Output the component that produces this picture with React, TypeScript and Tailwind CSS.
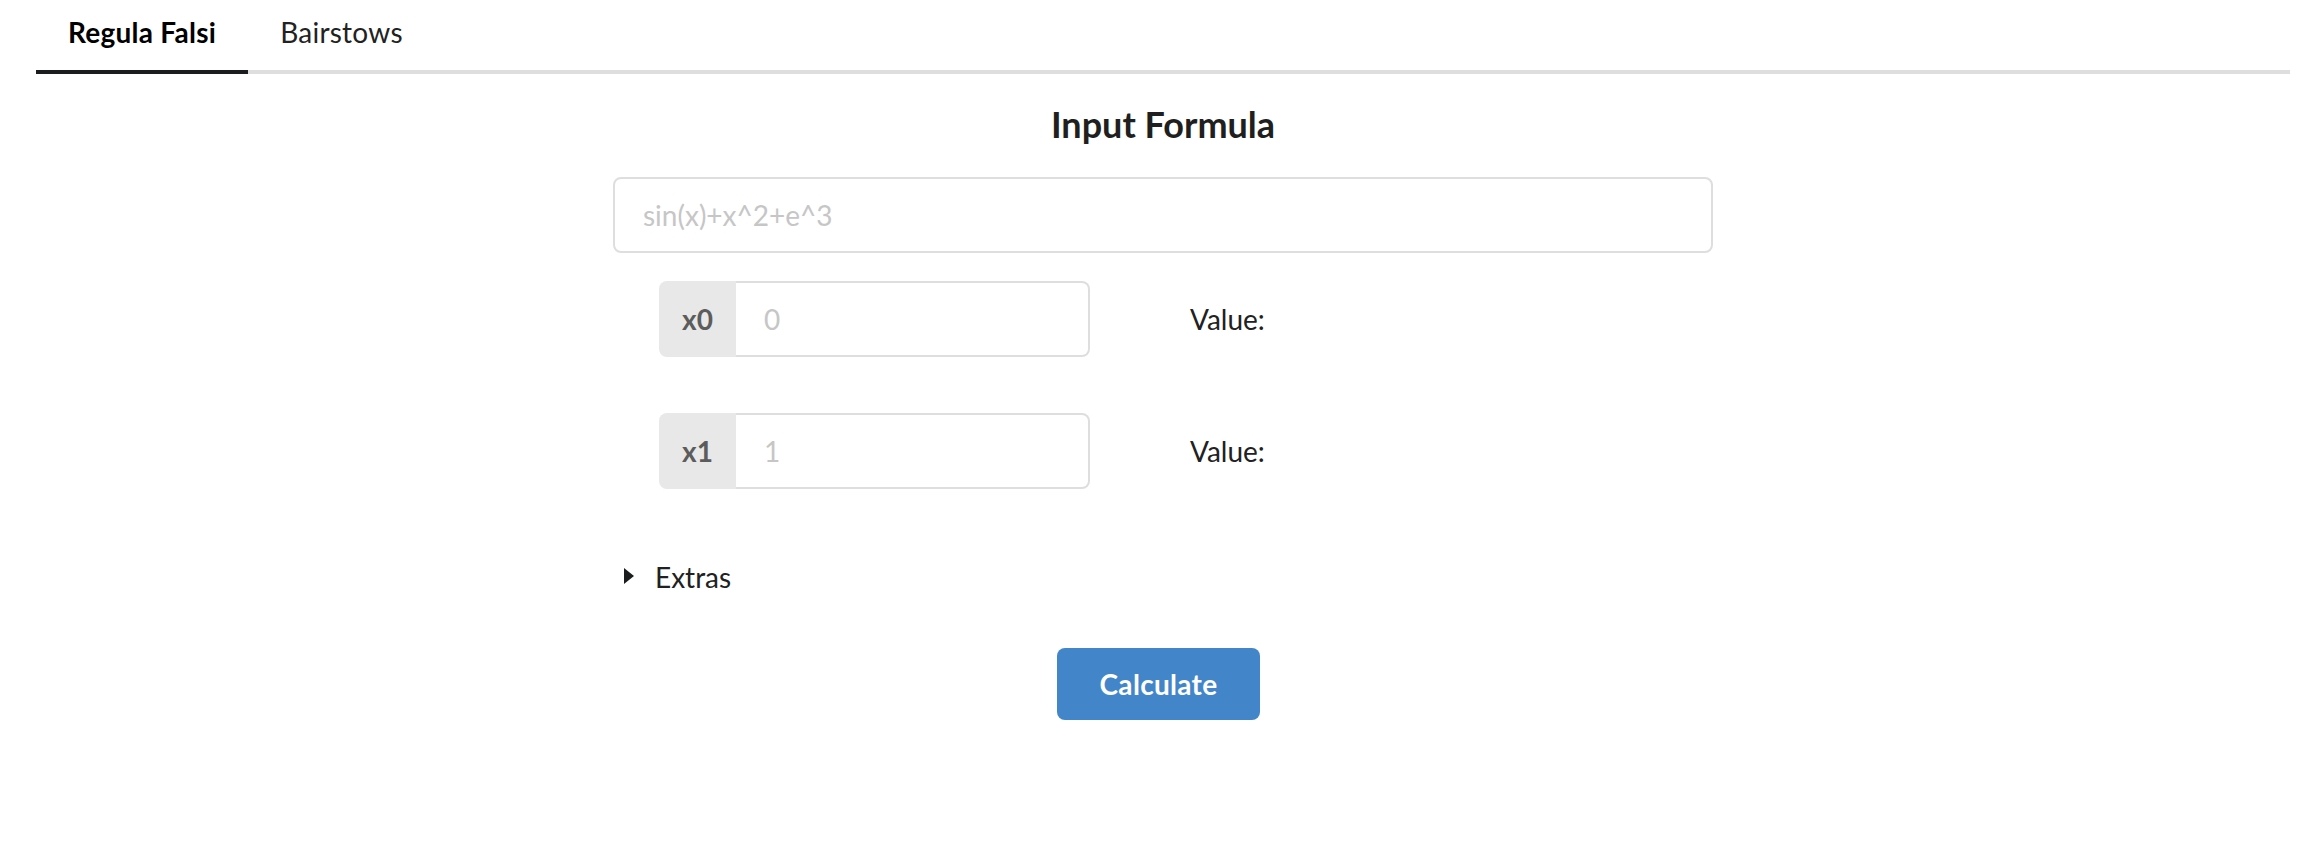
const tabs = ["Regula Falsi", "Bairstows"];

function LabeledInput({ label, placeholder }: { label: string; placeholder: string }) {
  return (
    <div className="flex w-[431px] h-[76px]">
      <div className="flex items-center justify-center w-[77px] bg-[#e8e8e8] rounded-l-[8px] text-[28px] font-bold text-[#5c5c5c]">
        {label}
      </div>
      <input
        placeholder={placeholder}
        className="flex-1 min-w-0 border-2 border-l-0 border-[#dedede] rounded-r-[8px] pl-[28px] text-[28px] text-[#222] placeholder:text-[#c6c6c6] outline-none"
      />
    </div>
  );
}

export default function App() {
  return (
    <div className="min-h-[850px] bg-white text-[#212121] font-['Lato','Liberation_Sans',sans-serif]">
      {/* ── Tab menu ── */}
      <div className="ml-[36px] mr-[16px] flex border-b-4 border-[#dedede]">
        {tabs.map((tab, i) => (
          <button
            key={tab}
            className={
              i === 0
                ? "px-[32px] pt-[18px] pb-[24px] leading-[28px] text-[28px] tracking-[0.25px] font-bold text-black border-b-4 border-[#1b1c1d] -mb-[4px]"
                : "px-[32px] pt-[18px] pb-[24px] leading-[28px] text-[28px] tracking-[0.25px] text-[#222]"
            }
          >
            {tab}
          </button>
        ))}
      </div>

      {/* ── Form ── */}
      <div className="ml-[36px] mr-[16px]">
        <div className="w-[1100px] mx-auto flex flex-col">
          <h3 className="mt-[27px] text-center text-[36px] leading-[46px] font-bold text-[#1f1f1f]">
            Input Formula
          </h3>

          <input
            placeholder="sin(x)+x^2+e^3"
            className="mt-[30px] h-[76px] w-full border-2 border-[#dedede] rounded-[8px] pl-[28px] text-[28px] placeholder:text-[#c6c6c6] outline-none"
          />

          <div className="mt-[28px] pl-[46px] flex items-center gap-[100px]">
            <LabeledInput label="x0" placeholder="0" />
            <span className="text-[28px]">Value:</span>
          </div>

          <div className="mt-[56px] pl-[46px] flex items-center gap-[100px]">
            <LabeledInput label="x1" placeholder="1" />
            <span className="text-[28px]">Value:</span>
          </div>

          {/* ── Extras accordion ── */}
          <div className="mt-[74px] pl-[11px] flex items-center gap-[21px] leading-[28px] text-[28px]">
            <svg width="10" height="16" viewBox="0 0 10 16" className="mt-[-2px]">
              <polygon points="0,0 10,8 0,16" fill="#1b1c1d" />
            </svg>
            <span>Extras</span>
          </div>

          <div className="mt-[57px] pr-[9px] flex justify-center">
            <button className="h-[72px] px-[43px] rounded-[8px] bg-[#4286c9] text-white text-[28px] tracking-[0.3px] font-bold leading-[28px]">
              Calculate
            </button>
          </div>
        </div>
      </div>
    </div>
  );
}
